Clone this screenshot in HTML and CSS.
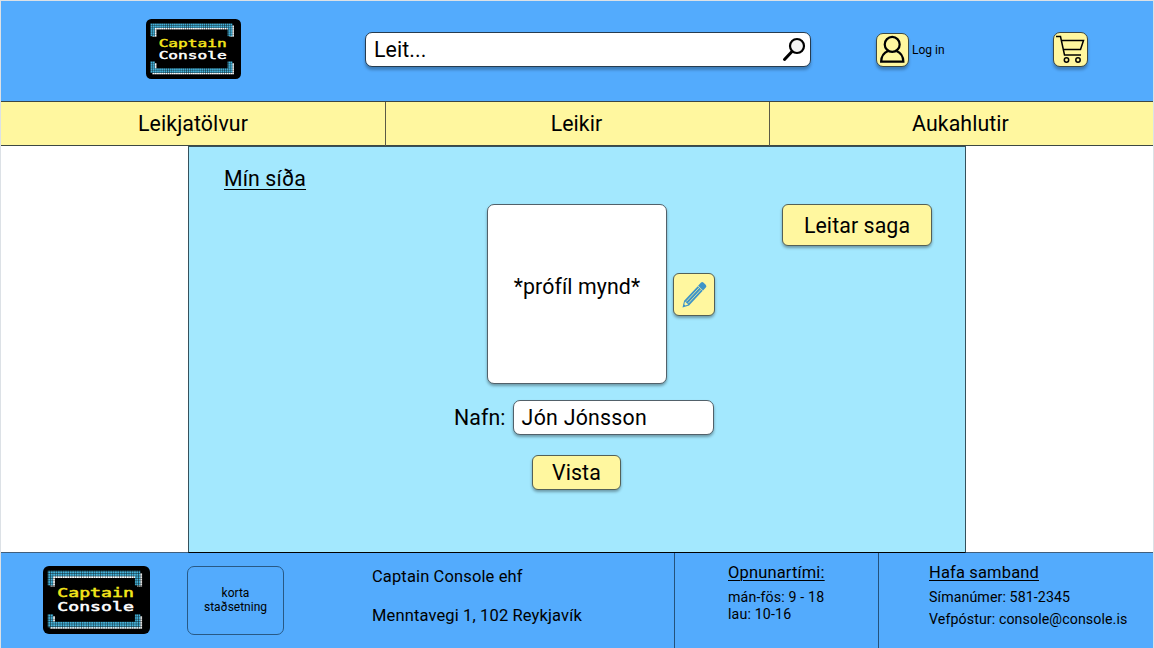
FILE: index.html
```html
<!DOCTYPE html>
<html lang="is">
<head>
<meta charset="utf-8">
<title>Captain Console</title>
<link rel="stylesheet" href="styles.css">
</head>
<body>
<div class="page">
  <header class="header">
    <svg class="logo logo-header" viewBox="0 0 108 68" preserveAspectRatio="none">
      <defs>
        <pattern id="grid" width="2.4" height="2.4" patternUnits="userSpaceOnUse"><path d="M0 .3H2.4M.3 0V2.4" stroke="#000" stroke-width=".55" opacity=".8"/></pattern>
        <g id="logo-art">
          <rect width="108" height="68" rx="6"/>
          <path fill="none" stroke="#fff" stroke-width="5" d="M9.500 20.500V9.500H97.500V20.500M9.500 50V60.500H97.500V50"/>
          <path fill="none" stroke="#46b4dc" stroke-width="5.400" d="M7.500 19.500V7.500H95.500V19.500M7.500 48V58.500H95.500V48"/>
          <path fill="url(#grid)" d="M4 4H101V22H4zM4 47H101V64H4z"/>
          <text class="logo-word word-top" x="0" y="0" transform="translate(14.400 31.200) scale(1.480 1)">Captain</text>
          <text class="logo-word word-bottom" x="0" y="0" transform="translate(14.400 45) scale(1.480 1)">Console</text>
        </g>
      </defs>
      <use href="#logo-art"/>
    </svg>
    <div class="search">
      <span>Leit...</span>
      <svg class="search-icon" viewBox="0 0 24 26"><circle cx="15" cy="9" r="7" fill="#f3f3f3" stroke="#000" stroke-width="2.200"/><path d="M10 14.500L2.500 22.500" stroke="#000" stroke-width="3" stroke-linecap="round"/></svg>
    </div>
    <a class="login">
      <span class="tile"><svg viewBox="0 0 32 33"><g fill="none" stroke="#000" stroke-width="2.300"><circle cx="15.700" cy="10.700" r="7.700"/><path d="M11.500 17.500C7.500 19 4.500 23 4.300 28.500H27.200C27 23 24 19 20 17.500"/></g></svg></span>
      <span>Log in</span>
    </a>
    <a class="tile cart"><svg viewBox="0 0 33 33"><g fill="none" stroke="#000" stroke-width="1.500"><path d="M2 3.500H6.500L10.500 22H27M7.500 7.500H29.500L26.500 16.500H9.500"/><circle cx="12.500" cy="27" r="2.200"/><circle cx="24" cy="27" r="2.200"/></g></svg></a>
  </header>
  <nav class="nav"><a>Leikjatölvur</a><a>Leikir</a><a>Aukahlutir</a></nav>
  <main class="main">
    <h1 class="title">Mín síða</h1>
    <div class="profile">
      <div class="picture">*prófíl mynd*</div>
      <div class="edit button">
        <svg viewBox="0 0 28 28"><g transform="translate(2.500 26.500) rotate(-47)" fill="#3e94c7"><path d="M0 0L6-3.400H26V3.400H6Z"/><path d="M26.500-3.400H30.500Q32.500-3.400 32.500-1.400V1.400Q32.500 3.400 30.500 3.400H26.500Z"/><path d="M3.500-.8L6-2.200V2.200L3.500 .8Z" fill="#fff79f"/><path d="M7-1.300H26M7 1.300H26" stroke="#fff79f" stroke-width=".7"/></g></svg>
      </div>
      <div class="history button">Leitar saga</div>
    </div>
    <div class="field"><span>Nafn:</span><div class="input">Jón Jónsson</div></div>
    <div class="save button">Vista</div>
  </main>
  <footer class="footer">
    <div class="company">
      <svg class="logo logo-footer" viewBox="0 0 108 68" preserveAspectRatio="none"><use href="#logo-art"/></svg>
      <div class="map">korta<br>staðsetning</div>
      <div class="address"><span>Captain Console ehf</span><span>Menntavegi 1, 102 Reykjavík</span></div>
    </div>
    <div class="hours"><h2>Opnunartími:</h2><p>mán-fös: 9 - 18<br>lau: 10-16</p></div>
    <div class="contact"><h2>Hafa samband</h2><p>Símanúmer: 581-2345</p><p>Vefpóstur: console@console.is</p></div>
  </footer>
</div>
</body>
</html>
```
FILE: styles.css
```css
* { box-sizing: border-box; }
body { margin: 0; background: #fff; color: #000; font: 21.3px/25px Roboto, sans-serif; letter-spacing: .1px; }
h1, h2, p { margin: 0; font-weight: 400; }
.page { width: 1154px; height: 648px; border: solid #dce1e6; border-width: 1px 1px 0; display: flex; flex-direction: column; overflow: hidden; }
.header { height: 100px; flex: none; background: #53abfd; display: flex; align-items: flex-start; padding-left: 145px; }
.logo { display: block; flex: none; }
.logo-header { width: 95px; height: 60px; margin-top: 18px; }
.logo-word { font: 12.4px "DejaVu Sans Mono", monospace; letter-spacing: 0; stroke-width: .5px; }
.word-top { fill: #f5e51b; stroke: #f5e51b; }
.word-bottom { fill: #fff; stroke: #fff; }
.search { width: 446px; height: 35px; margin: 31px 0 0 124px; padding: 0 4px 0 8px; display: flex; align-items: center; justify-content: space-between; background: #fff; border: 1px solid #263c50; border-radius: 7px; box-shadow: 0 3px 3px #0004; }
.search-icon { width: 24px; height: 26px; }
.login { display: flex; align-items: center; gap: 3px; margin: 32px 0 0 65px; width: 177px; font-size: 12px; line-height: 14px; letter-spacing: 0; }
.login span + span { margin-top: -1px; }
.tile { width: 33px; height: 34px; flex: none; border: 1px solid #3c4843; border-radius: 7px; background: #fff79f; box-shadow: 0 3px 3px #0004; }
.tile svg { display: block; width: 100%; height: 100%; }
.cart { width: 35px; height: 35px; margin-top: 31px; }
.nav { height: 45px; flex: none; display: grid; grid-template-columns: 384px 384px 1fr; background: #fff79f; border: solid #3d4842; border-width: 1px 0; text-align: center; line-height: 44px; }
.nav a + a { border-left: 1px solid #5b5b45; padding-right: 2px; }
.main { width: 778px; height: 407px; flex: none; margin-left: 187px; border: 1px solid #35515c; border-bottom-color: #000; background: #a3e8fe; display: flex; flex-direction: column; position: relative; z-index: 1; }
.title { font-size: 21.3px; line-height: 25px; margin: 19px 0 0 35px; text-decoration: underline; text-decoration-thickness: 1px; text-underline-offset: 3px; }
.button { background: #fff79f; border: 1px solid #536158; border-radius: 6px; box-shadow: 0 2px 3px #0005; display: flex; align-items: center; justify-content: center; }
.profile { display: flex; padding-left: 298px; margin-top: 13px; }
.picture { width: 180px; height: 180px; background: #fff; border: 1px solid #52616a; border-radius: 7px; box-shadow: 0 2px 3px #0005; display: flex; align-items: center; justify-content: center; padding-bottom: 15px; }
.edit { width: 42px; height: 43px; margin: 69px 0 0 6px; }
.edit svg { width: 28px; height: 28px; flex: none; }
.history { width: 150px; height: 42px; margin-left: 67px; }
.field { display: flex; align-items: center; gap: 7px; margin: 16px 0 0 265px; }
.input { width: 201px; height: 35px; padding: 4px 8px; background: #fff; border: 1px solid #52616a; border-radius: 7px; box-shadow: 0 2px 3px #0005; letter-spacing: .27px; }
.save { width: 89px; height: 35px; margin: 20px 0 0 343px; }
.footer { flex: 1; margin-top: -1px; display: grid; grid-template-columns: 673px 204px 1fr; background: #53abfd; border-top: 1px solid #405f7d; font-size: 14.2px; line-height: 17px; }
.company { display: flex; }
.logo-footer { width: 107px; height: 68px; margin: 13px 0 0 42px; }
.map { width: 97px; height: 69px; margin: 13px 0 0 37px; border: 1px solid #285985; border-radius: 7px; display: flex; align-items: center; justify-content: center; text-align: center; font-size: 12px; line-height: 14px; letter-spacing: 0; padding-bottom: 2px; }
.address { display: flex; flex-direction: column; gap: 20px; margin: 14px 0 0 88px; font-size: 16.5px; line-height: 19px; letter-spacing: .13px; }
.footer h2 { font-size: 16.5px; line-height: 19px; letter-spacing: .15px; text-decoration: underline; text-decoration-thickness: 1px; text-underline-offset: 2px; }
.hours { border-left: 1px solid #24527b; padding: 10px 0 0 53px; }
.hours p { margin-top: 7px; letter-spacing: .15px; }
.contact { border-left: 1px solid #24527b; padding: 10px 0 0 50px; }
.contact p { margin-top: 5px; }
.contact h2 + p { margin-top: 7px; }
```
